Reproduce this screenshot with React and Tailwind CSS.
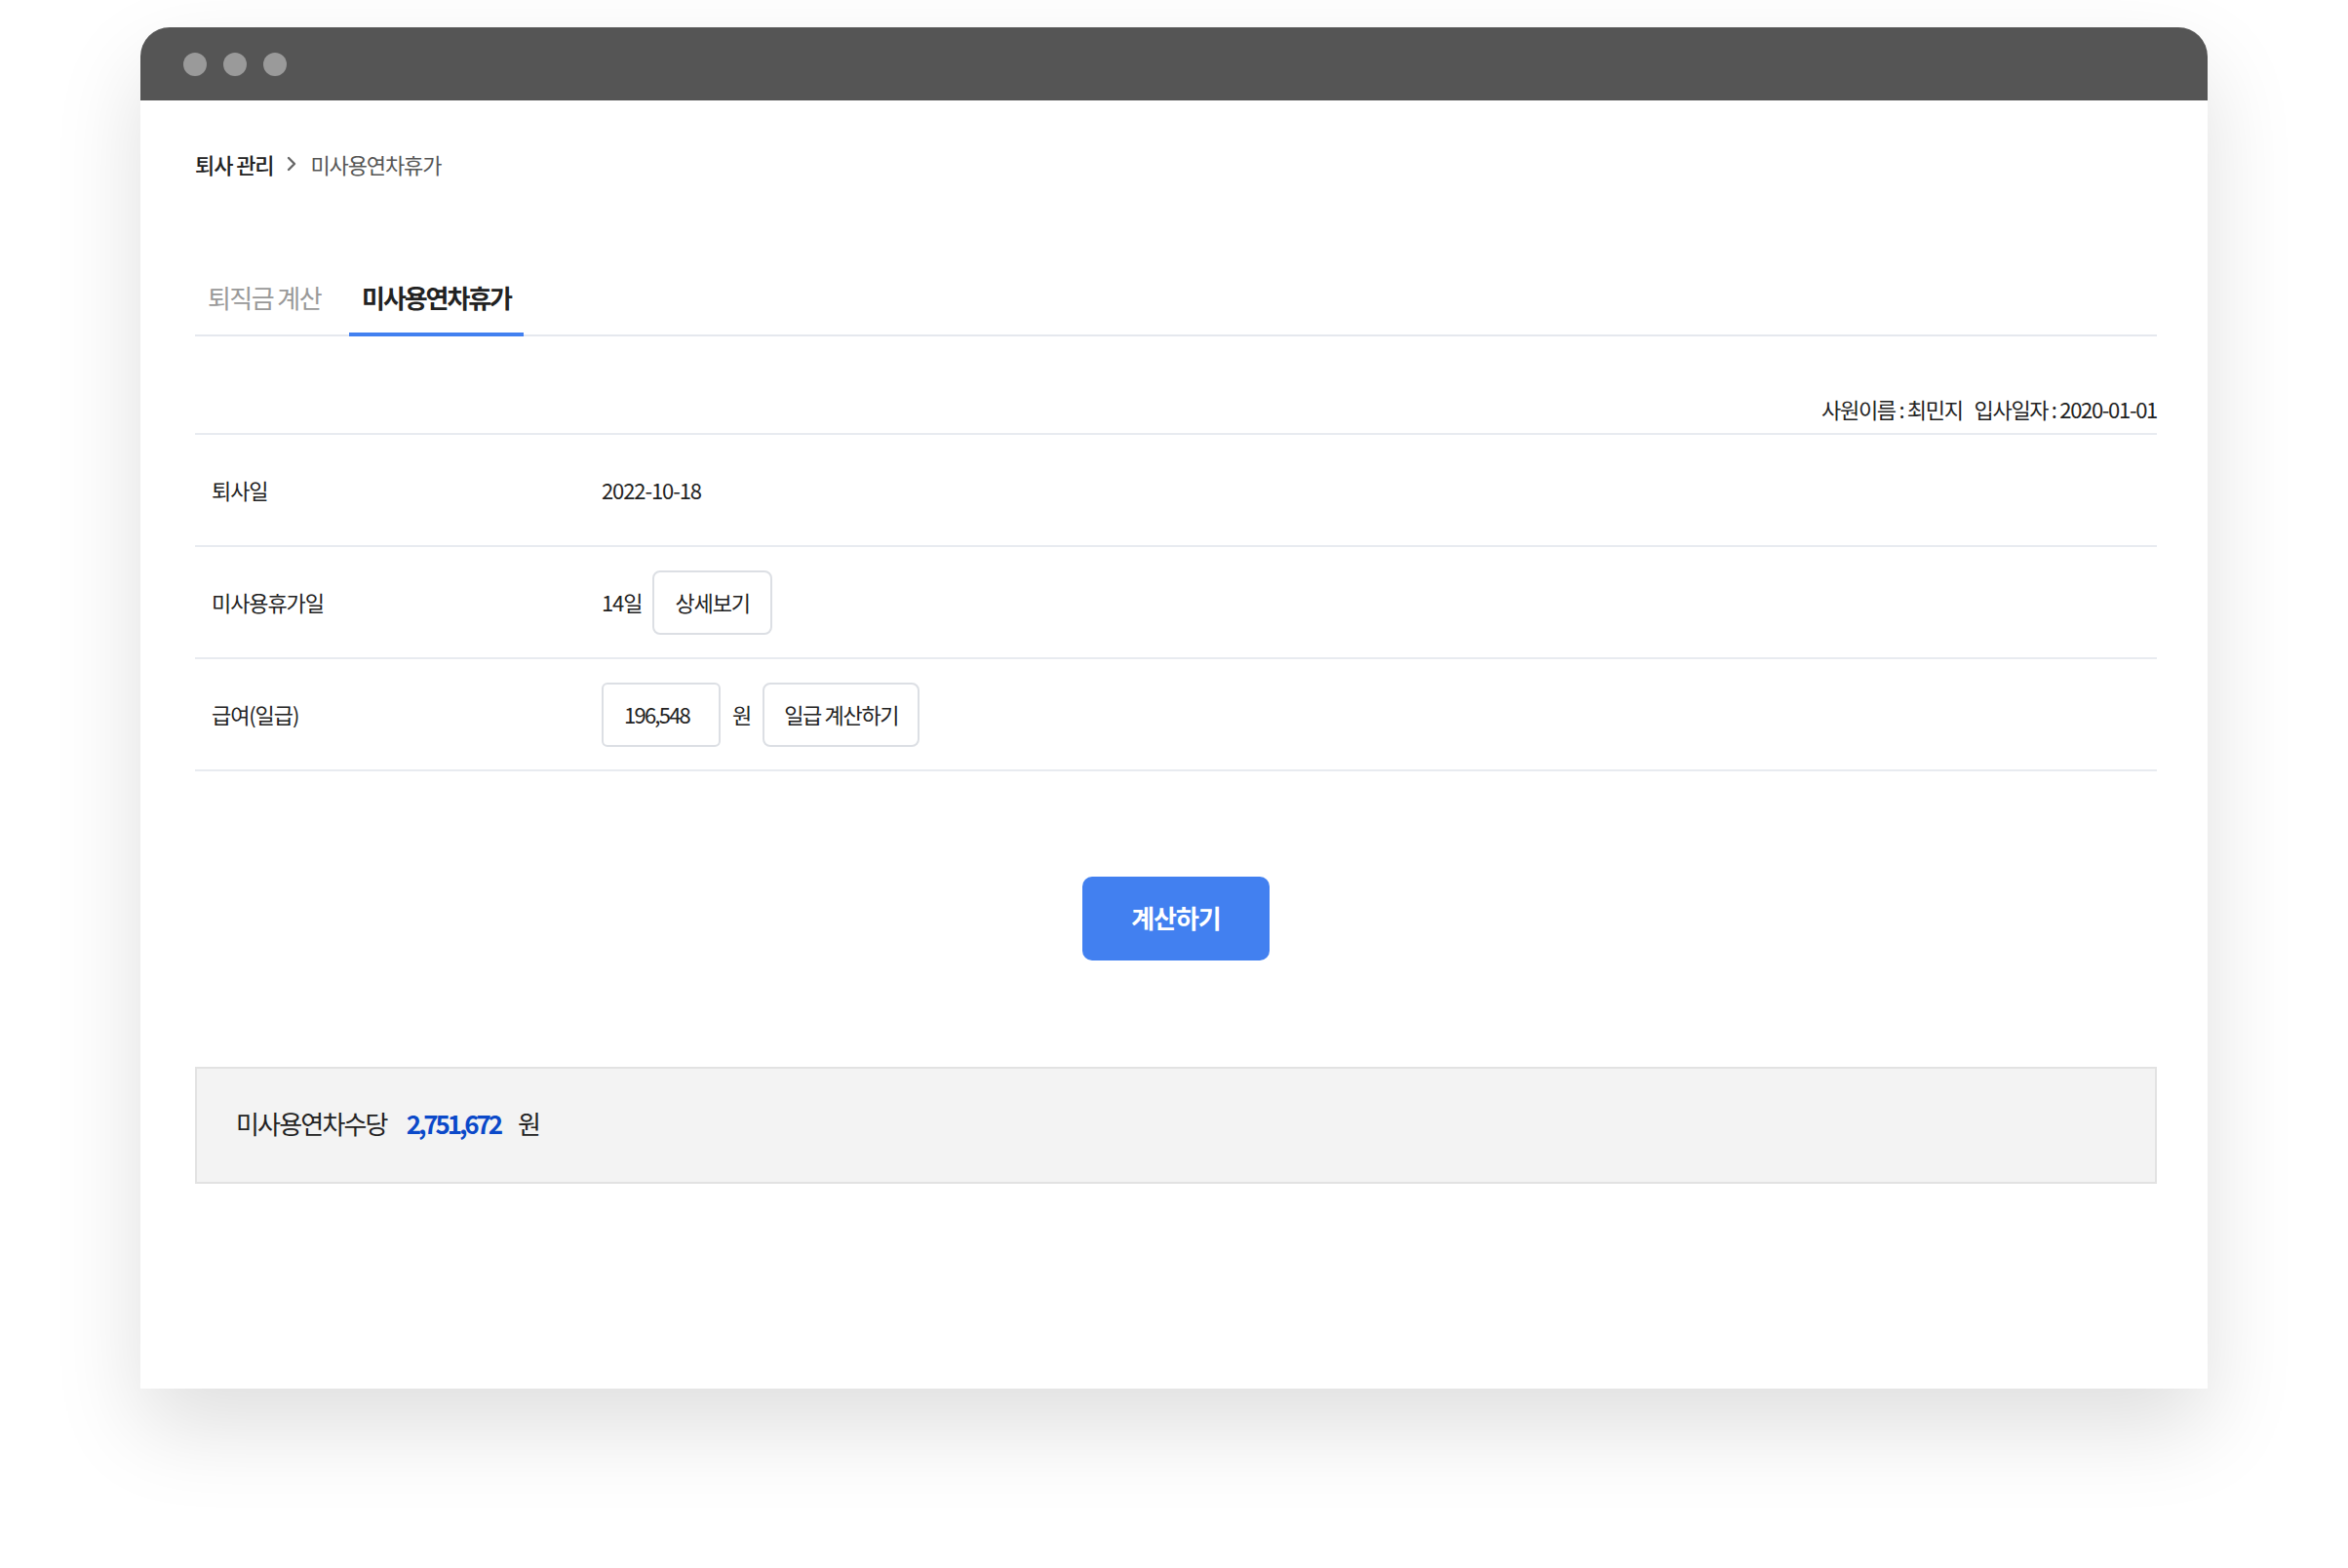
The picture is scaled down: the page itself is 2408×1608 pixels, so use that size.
import React from 'react';

const font = { fontFamily: '"Noto Sans CJK KR", "Noto Sans", sans-serif' };

function Chevron() {
  return (
    <svg width="14" height="20" viewBox="0 0 14 20" fill="none" className="mx-[12px]">
      <path d="M4 4l6 6-6 6" stroke="#666" strokeWidth="2.4" strokeLinecap="round" strokeLinejoin="round" />
    </svg>
  );
}

function Row({ label, children }) {
  return (
    <div className="flex items-center h-[115px] border-b-2 border-[#e8ebf0]">
      <div className="w-[417px] pl-[17px] text-[22px] text-[#222] tracking-[-0.05em]">{label}</div>
      <div className="flex items-center text-[22px] text-[#222] tracking-[-0.05em]">{children}</div>
    </div>
  );
}

export default function App() {
  return (
    <div style={font} className="min-h-screen bg-white pt-[28px] flex justify-center">
      <div className="w-[2120px] h-[1396px] bg-white rounded-t-[30px] shadow-[0_40px_90px_rgba(0,0,0,0.13)]">
        {/* title bar */}
        <div className="h-[75px] bg-[#555555] rounded-t-[30px] flex items-center gap-[17px] pl-[44px]">
          <span className="w-[24px] h-[24px] rounded-full bg-[#9a9a9a]" />
          <span className="w-[24px] h-[24px] rounded-full bg-[#9a9a9a]" />
          <span className="w-[24px] h-[24px] rounded-full bg-[#9a9a9a]" />
        </div>

        <div className="px-[56px] pr-[52px]">
          {/* breadcrumb */}
          <div className="mt-[49px] flex items-center h-[32px] text-[22px] tracking-[-0.05em]">
            <span className="text-[#222] font-medium">퇴사 관리</span>
            <Chevron />
            <span className="text-[#555]">미사용연차휴가</span>
          </div>

          {/* tabs */}
          <div className="mt-[103px] flex gap-[16px] border-b-2 border-[#e5e8ee]">
            <div className="px-[13px] pb-[20px] text-[26px] leading-[36px] text-[#999] tracking-[-0.06em]">퇴직금 계산</div>
            <div className="px-[13px] pb-[17px] text-[26px] leading-[36px] text-[#222] font-bold tracking-[-0.08em] border-b-4 border-[#4280f0] -mb-[2px]">미사용연차휴가</div>
          </div>

          {/* employee info */}
          <div className="mt-[58px] pb-[9px] flex justify-end gap-[12px] text-[22px] leading-[32px] text-[#222] tracking-[-0.06em] border-b-2 border-[#e8ebf0]">
            <span>사원이름 : 최민지</span>
            <span>입사일자 : 2020-01-01</span>
          </div>

          {/* form rows */}
          <Row label="퇴사일">2022-10-18</Row>
          <Row label="미사용휴가일">
            <span>14일</span>
            <button className="ml-[11px] h-[66px] px-[21px] border-2 border-[#dcdfe4] rounded-[8px] bg-white text-[22px] text-[#222] tracking-[-0.05em]">상세보기</button>
          </Row>
          <Row label="급여(일급)">
            <div className="w-[122px] h-[66px] flex items-center pl-[21px] border-2 border-[#dcdfe4] rounded-[6px] bg-white tracking-[-0.08em]">196,548</div>
            <span className="mx-[12px]">원</span>
            <button className="h-[66px] px-[20px] border-2 border-[#dcdfe4] rounded-[8px] bg-white text-[22px] text-[#222] tracking-[-0.06em]">일급 계산하기</button>
          </Row>

          {/* calculate button */}
          <div className="mt-[108px] flex justify-center">
            <button className="w-[192px] h-[86px] pb-[3px] rounded-[10px] bg-[#4280f0] text-white text-[26px] font-bold tracking-[-0.04em]">계산하기</button>
          </div>

          {/* result */}
          <div className="mt-[109px] h-[120px] flex items-center pl-[40px] pb-[6px] bg-[#f3f3f3] border-2 border-[#e2e2e2] text-[26px] tracking-[-0.07em] text-[#222]">
            <span>미사용연차수당</span>
            <span className="ml-[20px] text-[#0b49c9] font-semibold tracking-[-0.12em]">2,751,672</span>
            <span className="ml-[18px]">원</span>
          </div>
        </div>
      </div>
    </div>
  );
}
